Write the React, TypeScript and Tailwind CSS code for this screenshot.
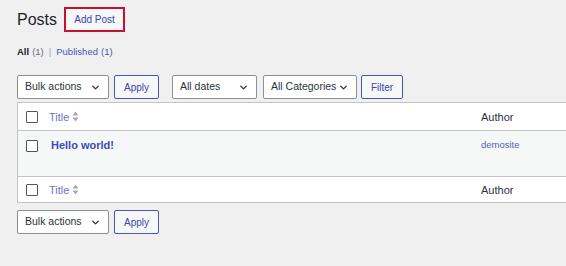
import { ChevronDown } from "lucide-react";

const font = { fontFamily: '"Liberation Sans", Arial, sans-serif' };

const Select = ({ label, w }: { label: string; w: string }) => (
  <div
    className={`flex items-center justify-between h-[24px] ${w} bg-white border border-[#8c8f94] rounded-[2px] pl-[7px] pr-[7px] text-[10.5px] text-[#2c3338] whitespace-nowrap`}
  >
    <span>{label}</span>
    <ChevronDown className="w-[11px] h-[11px] text-[#2c3338] shrink-0" strokeWidth={3} />
  </div>
);

const Btn = ({ label, w }: { label: string; w: string }) => (
  <div
    className={`flex items-center justify-center h-[24px] ${w} bg-[#f6f7f7] border border-[#4b55b5] rounded-[2px] text-[10px] text-[#3c46ad]`}
  >
    {label}
  </div>
);

const Check = () => (
  <div className="w-[12px] h-[12px] border border-[#50575e] rounded-[1px] bg-white shrink-0" />
);

const Sort = () => (
  <svg width="7" height="11" viewBox="0 0 7 11" className="ml-[3px]">
    <path d="M3.5 0.5 L6.5 4.5 H0.5 Z" fill="#a7aaad" />
    <path d="M3.5 10.5 L6.5 6.5 H0.5 Z" fill="#a7aaad" />
  </svg>
);

const HeadRow = ({ h, border }: { h: string; border: string }) => (
  <div className={`grid grid-cols-[31px_432px_1fr] items-center ${h} ${border} bg-white`}>
    <div className="pl-[8px]">
      <Check />
    </div>
    <div className="flex items-center text-[11px] text-[#6e73c4]">
      Title
      <Sort />
    </div>
    <div className="text-[11px] text-[#2c3338]">Author</div>
  </div>
);

export default function App() {
  return (
    <div className="w-[566px] h-[266px] bg-[#f0f0f1] overflow-hidden pl-[17px]" style={font}>
      <div className="flex items-center pt-[7px]">
        <h1 className="text-[16px] text-[#1d2327] leading-none">Posts</h1>
        <div className="ml-[7px] flex items-center justify-center w-[61px] h-[25px] border-2 border-[#c8102e] bg-[#f6f7f7] text-[10px] text-[#3b45b0]">
          Add Post
        </div>
      </div>

      <div className="mt-[13px] flex items-center text-[9.5px] text-[#646970]">
        <span className="font-semibold text-[#1d2327]">All</span>
        <span className="ml-[3px]">(1)</span>
        <span className="mx-[5px] text-[#a7aaad]">|</span>
        <span className="text-[#4b55b5]">Published</span>
        <span className="ml-[3px] text-[#4b55b5]">(1)</span>
      </div>

      <div className="mt-[16px] flex items-center">
        <Select label="Bulk actions" w="w-[92px]" />
        <div className="ml-[5px]">
          <Btn label="Apply" w="w-[45px]" />
        </div>
        <div className="ml-[13px]">
          <Select label="All dates" w="w-[85px]" />
        </div>
        <div className="ml-[6px]">
          <Select label="All Categories" w="w-[94px]" />
        </div>
        <div className="ml-[4px]">
          <Btn label="Filter" w="w-[42px]" />
        </div>
      </div>

      <div className="mt-[3px] w-[580px] border border-[#c3c4c7] bg-white">
        <HeadRow h="h-[28px]" border="border-b border-[#c3c4c7]" />
        <div className="grid grid-cols-[31px_432px_1fr] items-start h-[45px] bg-[#f6f7f7] pt-[8px]">
          <div className="pl-[8px] pt-[1px]">
            <Check />
          </div>
          <div className="pl-[2px] text-[11px] font-bold text-[#3f4cb3] leading-[12px]">
            Hello world!
          </div>
          <div className="text-[9.5px] text-[#5660b9] leading-[12px]">demosite</div>
        </div>
        <HeadRow h="h-[26px]" border="border-t border-[#c3c4c7]" />
      </div>

      <div className="mt-[7px] flex items-center">
        <Select label="Bulk actions" w="w-[92px]" />
        <div className="ml-[5px]">
          <Btn label="Apply" w="w-[45px]" />
        </div>
      </div>
    </div>
  );
}
